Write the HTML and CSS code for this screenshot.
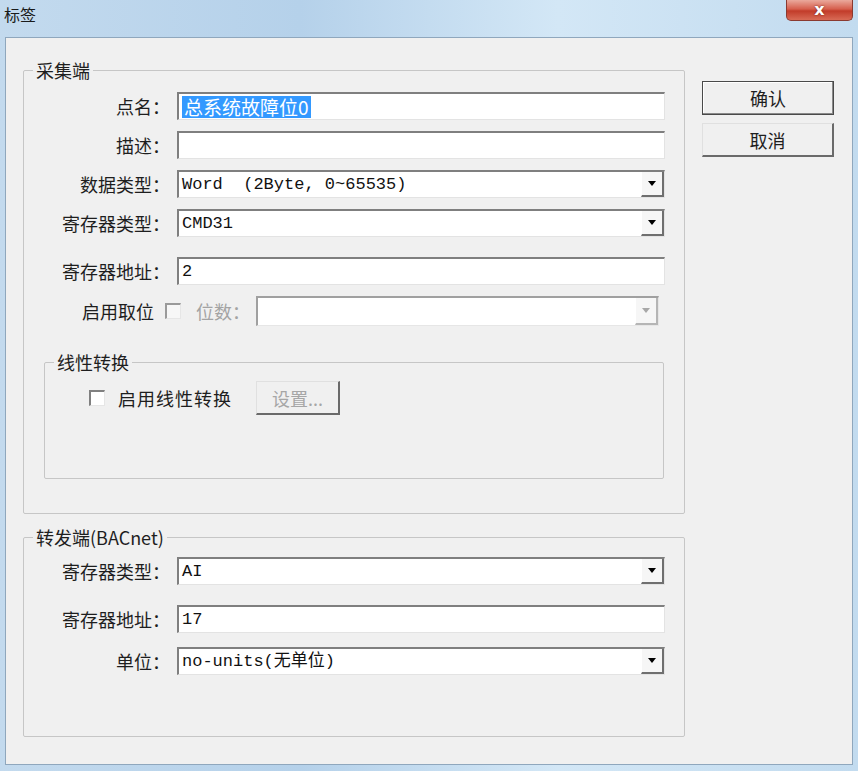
FILE: index.html
```html
<!DOCTYPE html>
<html lang="zh-CN">
<head>
    <meta charset="UTF-8">
    <meta name="viewport" content="width=device-width, initial-scale=1.0">
    <title>标签</title>
    <link rel="stylesheet" href="styles.css">
</head>
<body>
<div class="window">
    <!-- Title Bar -->
    <div class="titlebar">
        <span class="title">标签</span>
        <span class="close-btn">x</span>
    </div>

    <div class="client">
        <div class="main">
            <!-- Collect side -->
            <div class="group group-collect">
                <div class="group-title">采集端</div>
                <div class="rows rows-collect">
                    <div class="row">
                        <span class="label">点名：</span>
                        <div class="field"><span class="selected">总系统故障位0</span></div>
                    </div>
                    <div class="row">
                        <span class="label">描述：</span>
                        <div class="field"></div>
                    </div>
                    <div class="row">
                        <span class="label">数据类型：</span>
                        <div class="field select"><span class="value">Word  (2Byte, 0~65535)</span><span class="arrow"></span></div>
                    </div>
                    <div class="row">
                        <span class="label">寄存器类型：</span>
                        <div class="field select"><span class="value">CMD31</span><span class="arrow"></span></div>
                    </div>
                    <div class="row row-spaced">
                        <span class="label">寄存器地址：</span>
                        <div class="field"><span class="value">2</span></div>
                    </div>
                    <div class="row-bits">
                        <span class="label">启用取位</span>
                        <span class="check check-disabled"></span>
                        <span class="label label-disabled">位数：</span>
                        <div class="field select select-disabled"><span class="value"></span><span class="arrow"></span></div>
                    </div>
                </div>

                <!-- Linear conversion -->
                <div class="group group-linear">
                    <div class="group-title">线性转换</div>
                    <div class="linear-row">
                        <span class="check"></span>
                        <span class="label linear-label">启用线性转换</span>
                        <span class="btn btn-disabled">设置...</span>
                    </div>
                </div>
            </div>

            <!-- Forward side -->
            <div class="group group-forward">
                <div class="group-title">转发端(BACnet)</div>
                <div class="rows rows-forward">
                    <div class="row">
                        <span class="label">寄存器类型：</span>
                        <div class="field select"><span class="value">AI</span><span class="arrow"></span></div>
                    </div>
                    <div class="row row-wide">
                        <span class="label">寄存器地址：</span>
                        <div class="field"><span class="value">17</span></div>
                    </div>
                    <div class="row">
                        <span class="label">单位：</span>
                        <div class="field select"><span class="value">no-units(无单位)</span><span class="arrow"></span></div>
                    </div>
                </div>
            </div>
        </div>

        <!-- Dialog buttons -->
        <div class="actions">
            <span class="btn btn-default">确认</span>
            <span class="btn">取消</span>
        </div>
    </div>
</div>
</body>
</html>
```

FILE: styles.css
```css
* {
    box-sizing: border-box;
}

body {
    margin: 0;
    font-family: "Noto Sans CJK SC", sans-serif;
    color: #1e1e1e;
    background: #bcd6ea;
}

.window {
    width: 858px;
    height: 771px;
    display: flex;
    flex-direction: column;
    background: linear-gradient(90deg, #c3daee 0%, #b5d1ea 35%, #d3e7f6 65%, #c2dbef 100%);
    overflow: hidden;
}

/* Title Bar */
.titlebar {
    height: 37px;
    flex: none;
    display: flex;
    justify-content: space-between;
    align-items: flex-start;
}

.title {
    padding: 4px 0 0 4px;
    font-size: 16px;
    line-height: 20px;
    color: #1a1a1a;
}

.close-btn {
    width: 67px;
    height: 21px;
    margin-right: 5px;
    border: 1px solid #8a3a30;
    border-top: none;
    border-radius: 0 0 5px 5px;
    background: linear-gradient(#eaa99c, #d65f4d 45%, #c23c2a 55%, #d86b56);
    color: #fff;
    font: bold 16px/19px "DejaVu Sans", sans-serif;
    text-align: center;
    text-shadow: 0 0 2px #6b1d14;
}

/* Client area */
.client {
    flex: 1;
    margin: 0 5px 6px 5px;
    border: 1px solid #8fa7bd;
    background: #f0f0f0;
    display: flex;
    padding: 32px 0 0 17px;
}

.main {
    width: 662px;
    display: flex;
    flex-direction: column;
}

/* Group boxes */
.group {
    border: 1px solid #c6c6c6;
    border-radius: 2px;
}

.group-collect {
    height: 444px;
}

.group-forward {
    height: 200px;
    margin-top: 23px;
}

.group-linear {
    height: 117px;
    margin: 36px 20px 0 20px;
}

.group-title {
    width: fit-content;
    margin: -11px 0 0 9px;
    padding: 0 3px;
    background: #f0f0f0;
    font-size: 18px;
    line-height: 20px;
}

/* Form rows */
.rows {
    display: flex;
    flex-direction: column;
}

.rows-collect {
    gap: 11px;
    margin-top: 12px;
}

.rows-forward {
    gap: 14px;
    margin-top: 10px;
}

.row {
    display: grid;
    grid-template-columns: 146px 488px;
    column-gap: 7px;
    align-items: center;
    height: 28px;
}

.row-spaced {
    margin-top: 9px;
}

.row-wide {
    margin-top: 6px;
}

.label {
    text-align: right;
    font-size: 18px;
    line-height: 20px;
    white-space: nowrap;
}

.label-disabled {
    color: #a3a3a3;
    margin-left: 15px;
}

/* Fields */
.field {
    height: 28px;
    display: flex;
    align-items: center;
    padding-left: 3px;
    background: #fff;
    border-style: solid;
    border-width: 2px 1px 1px 2px;
    border-color: #7f7f7f #e3e3e3 #e3e3e3 #7f7f7f;
    font: 17px/24px "Liberation Mono", "Noto Sans CJK SC", monospace;
    white-space: pre;
    color: #111;
}

.selected {
    padding: 0 2px;
    background: #3399ff;
    color: #fff;
    font: 19px/22px "Noto Sans CJK SC", sans-serif;
}

.select .value {
    flex: 1;
}

.arrow {
    width: 23px;
    align-self: stretch;
    display: flex;
    align-items: center;
    justify-content: center;
    background: #f6f6f6;
    border-left: 1px solid #fff;
    border-right: 2px solid #6f6f6f;
    border-bottom: 2px solid #6f6f6f;
}

.arrow::after {
    content: "";
    border-left: 4px solid transparent;
    border-right: 4px solid transparent;
    border-top: 5px solid #000;
}

/* Bit selection row */
.row-bits {
    display: flex;
    align-items: center;
    height: 30px;
    padding-left: 58px;
}

.select-disabled {
    width: 403px;
    height: 30px;
    margin-left: 6px;
    border-color: #a0a0a0 #e6e6e6 #e6e6e6 #a0a0a0;
}

.select-disabled .arrow {
    border-right-color: #b5b5b5;
    border-bottom-color: #b5b5b5;
}

.select-disabled .arrow::after {
    border-top-color: #a8a8a8;
}

/* Checkbox */
.check {
    width: 16px;
    height: 16px;
    flex: none;
    background: #fff;
    border-style: solid;
    border-width: 2px 1px 1px 2px;
    border-color: #808080 #e6e6e6 #e6e6e6 #808080;
}

.row-bits .check {
    margin-left: 11px;
}

.check-disabled {
    background: #f7f7f7;
    border-color: #9a9a9a #e6e6e6 #e6e6e6 #9a9a9a;
}

/* Linear conversion row */
.linear-row {
    display: flex;
    align-items: center;
    margin-top: 9px;
    padding-left: 44px;
}

.linear-label {
    margin-left: 13px;
    letter-spacing: 1px;
}

/* Buttons */
.actions {
    width: 132px;
    margin-left: 17px;
    padding-top: 11px;
    display: flex;
    flex-direction: column;
    gap: 8px;
}

.btn {
    height: 34px;
    display: flex;
    align-items: center;
    justify-content: center;
    background: #f0f0f0;
    font-size: 18px;
    border-style: solid;
    border-width: 1px 2px 2px 1px;
    border-color: #e0e0e0 #6a6a6a #6a6a6a #e0e0e0;
}

.btn-default {
    border: 1px solid #4a4a4a;
    box-shadow: inset -1px -1px 0 #8a8a8a, inset 1px 1px 0 #fff;
}

.btn-disabled {
    width: 84px;
    margin-left: 24px;
    color: #a6a6a6;
}
```
